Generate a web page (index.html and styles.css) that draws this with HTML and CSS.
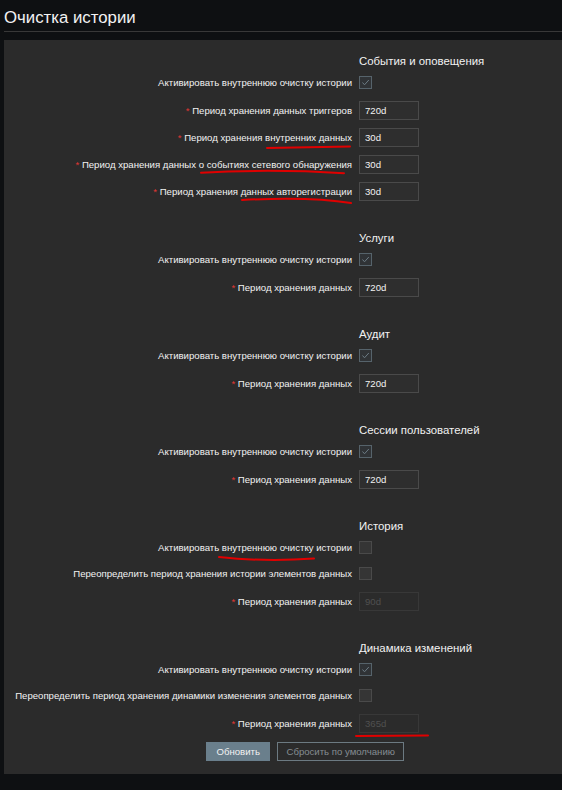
FILE: index.html
```html
<!DOCTYPE html>
<html>
<head>
    <meta charset="utf-8" />
    <title>Очистка истории</title>
    <link rel="stylesheet" href="styles.css">
</head>
<body>
    <div class="header">
        <h1>Очистка истории</h1>
    </div>

    <div class="panel">
        <form class="form" action="javascript:;">
            <!-- События и оповещения -->
            <div class="row head first"><span class="lbl"></span><div class="fld">События и оповещения</div></div>
            <div class="row chk">
                <label class="lbl">Активировать внутреннюю очистку истории</label>
                <div class="fld"><span class="cb on"><svg viewBox="0 0 11 11"><polyline points="2.5,5.5 4.5,7.8 8.8,3" /></svg></span></div>
            </div>
            <div class="row inp">
                <label class="lbl"><span class="req">*</span> Период хранения данных триггеров</label>
                <div class="fld"><input type="text" value="720d"></div>
            </div>
            <div class="row inp">
                <label class="lbl"><span class="req">*</span> Период хранения внутренних данных</label>
                <div class="fld"><input type="text" value="30d"></div>
            </div>
            <div class="row inp">
                <label class="lbl"><span class="req">*</span> Период хранения данных о событиях сетевого обнаружения</label>
                <div class="fld"><input type="text" value="30d"></div>
            </div>
            <div class="row inp">
                <label class="lbl"><span class="req">*</span> Период хранения данных авторегистрации</label>
                <div class="fld"><input type="text" value="30d"></div>
            </div>

            <!-- Услуги -->
            <div class="row head"><span class="lbl"></span><div class="fld">Услуги</div></div>
            <div class="row chk">
                <label class="lbl">Активировать внутреннюю очистку истории</label>
                <div class="fld"><span class="cb on"><svg viewBox="0 0 11 11"><polyline points="2.5,5.5 4.5,7.8 8.8,3" /></svg></span></div>
            </div>
            <div class="row inp">
                <label class="lbl"><span class="req">*</span> Период хранения данных</label>
                <div class="fld"><input type="text" value="720d"></div>
            </div>

            <!-- Аудит -->
            <div class="row head"><span class="lbl"></span><div class="fld">Аудит</div></div>
            <div class="row chk">
                <label class="lbl">Активировать внутреннюю очистку истории</label>
                <div class="fld"><span class="cb on"><svg viewBox="0 0 11 11"><polyline points="2.5,5.5 4.5,7.8 8.8,3" /></svg></span></div>
            </div>
            <div class="row inp">
                <label class="lbl"><span class="req">*</span> Период хранения данных</label>
                <div class="fld"><input type="text" value="720d"></div>
            </div>

            <!-- Сессии пользователей -->
            <div class="row head"><span class="lbl"></span><div class="fld">Сессии пользователей</div></div>
            <div class="row chk">
                <label class="lbl">Активировать внутреннюю очистку истории</label>
                <div class="fld"><span class="cb on"><svg viewBox="0 0 11 11"><polyline points="2.5,5.5 4.5,7.8 8.8,3" /></svg></span></div>
            </div>
            <div class="row inp">
                <label class="lbl"><span class="req">*</span> Период хранения данных</label>
                <div class="fld"><input type="text" value="720d"></div>
            </div>

            <!-- История -->
            <div class="row head"><span class="lbl"></span><div class="fld">История</div></div>
            <div class="row chk">
                <label class="lbl">Активировать внутреннюю очистку истории</label>
                <div class="fld"><span class="cb"></span></div>
            </div>
            <div class="row chk">
                <label class="lbl">Переопределить период хранения истории элементов данных</label>
                <div class="fld"><span class="cb"></span></div>
            </div>
            <div class="row inp">
                <label class="lbl"><span class="req">*</span> Период хранения данных</label>
                <div class="fld"><input type="text" value="90d" disabled></div>
            </div>

            <!-- Динамика изменений -->
            <div class="row head"><span class="lbl"></span><div class="fld">Динамика изменений</div></div>
            <div class="row chk">
                <label class="lbl">Активировать внутреннюю очистку истории</label>
                <div class="fld"><span class="cb on"><svg viewBox="0 0 11 11"><polyline points="2.5,5.5 4.5,7.8 8.8,3" /></svg></span></div>
            </div>
            <div class="row chk">
                <label class="lbl">Переопределить период хранения динамики изменения элементов данных</label>
                <div class="fld"><span class="cb"></span></div>
            </div>
            <div class="row inp">
                <label class="lbl"><span class="req">*</span> Период хранения данных</label>
                <div class="fld"><input type="text" value="365d" disabled></div>
            </div>

            <div class="buttons">
                <button type="submit" class="btn">Обновить</button>
                <button type="button" class="btn alt">Сбросить по умолчанию</button>
            </div>
        </form>
    </div>

    <!-- красные пометки поверх формы -->
    <svg class="marks" width="562" height="790" viewBox="0 0 562 790">
        <path d="M267 148 Q308 147 350 146.5" />
        <path d="M201 172.7 Q272 168.7 344 173.3" />
        <path d="M242 200 C280 198 320 198 351 203" />
        <path d="M219 557 Q265 562 314 558.5" />
        <path d="M356 736 L428 735.5" />
    </svg>
</body>
</html>
```

FILE: styles.css
```css
body {
    margin: 0;
    padding: 0;
    position: relative;
    min-height: 790px;
    overflow: hidden;
    background: #0e1012;
    color: #f2f2f2;
    font: 9.6px/1.2 "Liberation Sans", Arial, sans-serif;
}

.header {
    margin-left: 4px;
    padding: 9px 0 4px;
    border-bottom: 1px solid #383838;
}

    .header h1 {
        margin: 0;
        font-size: 16.8px;
        line-height: 18px;
        font-weight: normal;
        color: #f2f2f2;
    }

.panel {
    margin: 8px 0 0 4px;
    padding: 14px 0 13px;
    background: #2b2b2b;
}

.form {
    display: flex;
    flex-direction: column;
    margin: 0;
}

.row {
    display: flex;
    align-items: flex-start;
    margin-bottom: 7px;
}

    .row .lbl {
        flex: none;
        width: 348px;
        text-align: right;
        white-space: nowrap;
    }

    .row .fld {
        margin-left: 7px;
    }

.head {
    margin-top: 22px;
    font-size: 11.4px;
    line-height: 14px;
}

    .head.first {
        margin-top: 0;
    }

.chk {
    height: 19px;
}

    .chk .lbl {
        line-height: 15px;
    }

.inp {
    height: 20px;
}

    .inp .lbl {
        line-height: 19px;
    }

.req {
    color: #e33734;
}

.cb {
    display: block;
    box-sizing: border-box;
    width: 13px;
    height: 13px;
    margin-top: 1px;
    border: 1px solid #4a4a4a;
    background: #353535;
}

    .cb.on {
        border-color: #56636b;
        background: #303336;
    }

    .cb svg {
        display: block;
        width: 11px;
        height: 11px;
        fill: none;
        stroke: #6c7b84;
        stroke-width: 1;
    }

input {
    box-sizing: border-box;
    width: 60px;
    height: 19px;
    margin: 0;
    padding: 0 5px;
    border: 1px solid #4a4a4a;
    background: #2e2e2e;
    color: #f2f2f2;
    font: 9.6px "Liberation Sans", Arial, sans-serif;
    outline: none;
}

    input:disabled {
        border-color: #383838;
        background: #2b2b2b;
        color: #505050;
    }

.buttons {
    display: flex;
    gap: 7px;
    margin: 1px 0 0 202px;
}

.btn {
    box-sizing: border-box;
    height: 19px;
    padding: 0 9.5px;
    border: 1px solid #6a7f8c;
    background: #6a7f8c;
    color: #f2f2f2;
    font: 9.6px "Liberation Sans", Arial, sans-serif;
}

    .btn.alt {
        padding: 0 8px;
        border-color: #6c7a82;
        background: transparent;
        color: #858d92;
    }

.marks {
    position: absolute;
    top: 0;
    left: 0;
    pointer-events: none;
}

    .marks path {
        fill: none;
        stroke: #e00000;
        stroke-width: 2;
        stroke-linecap: round;
    }
```
